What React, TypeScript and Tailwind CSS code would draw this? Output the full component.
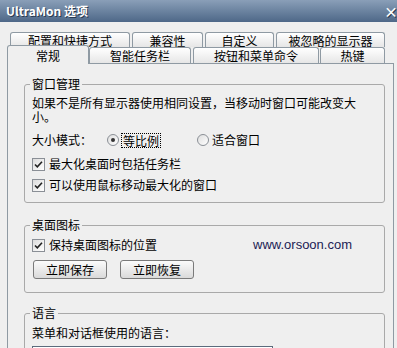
import React from 'react';

const font = { fontFamily: '"Noto Sans CJK SC", "Liberation Sans", sans-serif' };

const Tab: React.FC<{ label: string; w: string; active?: boolean; back?: boolean; className?: string }> = ({ label, w, active, back, className = '' }) => (
  <div
    className={`${w} ${className} flex items-center justify-center border border-[#8f9aa3] rounded-t-[3px] text-[12px] leading-[13px] text-black ${
      active
        ? 'h-[19px] -mb-[1px] border-b-0 bg-[#efefef] relative z-10 items-start pt-[3px]'
        : back
        ? 'h-[15px] border-b-0 bg-linear-to-b from-[#ffffff] to-[#e6e6e6]'
        : 'h-[16px] border-b-0 bg-linear-to-b from-[#ffffff] to-[#e6e6e6]'
    }`}
  >
    {label}
  </div>
);

const CheckBox: React.FC<{ label: string }> = ({ label }) => (
  <div className="flex items-center h-[16px] gap-[4px]">
    <div className="w-[13px] h-[13px] border border-[#8a8f96] bg-linear-to-br from-[#dcdcdc] to-[#ffffff] flex items-center justify-center">
      <svg width="9" height="9" viewBox="0 0 9 9">
        <path d="M1 4.5 L3.3 6.8 L8 1.8" stroke="#222" strokeWidth="1.6" fill="none" />
      </svg>
    </div>
    <span className="text-[12px] leading-[14px]">{label}</span>
  </div>
);

const Radio: React.FC<{ checked?: boolean }> = ({ checked }) => (
  <div className="w-[12px] h-[12px] rounded-full border border-[#8a8f96] bg-linear-to-br from-[#dedede] to-[#ffffff] flex items-center justify-center">
    {checked && <div className="w-[4px] h-[4px] rounded-full bg-[#333]" />}
  </div>
);

const Button: React.FC<{ label: string }> = ({ label }) => (
  <button className="w-[74px] h-[19px] border border-[#7a7a7a] rounded-[3px] bg-linear-to-b from-[#fbfbfb] to-[#dadada] text-[12px] leading-[14px] text-black flex items-center justify-center">
    {label}
  </button>
);

const Group: React.FC<{ title: string; className?: string; children: React.ReactNode }> = ({ title, className = '', children }) => (
  <fieldset className={`ml-[16px] mr-[8px] border border-[#a9a9a9] rounded-[3px] px-[7px] ${className}`}>
    <legend className="-ml-[2px] px-[2px] text-[12px] leading-[16px]">{title}</legend>
    {children}
  </fieldset>
);

export default function App() {
  return (
    <div className="w-[397px] h-[348px] overflow-hidden bg-[#efefef] text-black" style={font}>
      <div className="h-[22px] flex items-center justify-between bg-linear-to-b from-[#8a9fb8] to-[#4e6888] pl-[6px]">
        <span className="text-white font-bold text-[12px] [text-shadow:1px_1px_0_#2a3a50]">UltraMon 选项</span>
        <span className="text-white font-bold text-[14px] -mr-[1px] [text-shadow:1px_1px_0_#2a3a50]">×</span>
      </div>

      <div className="mt-[10px] flex h-[15px] items-start">
        <Tab label="配置和快捷方式" w="w-[120px]" className="ml-[10px]" back />
        <Tab label="兼容性" w="w-[71px]" className="ml-[2px]" back />
        <Tab label="自定义" w="w-[69px]" className="ml-[2px]" back />
        <Tab label="被忽略的显示器" w="w-[109px]" className="ml-[2px]" back />
      </div>
      <div className="flex h-[16px] items-end">
        <Tab label="常规" w="w-[82px]" className="ml-[7px]" active />
        <Tab label="智能任务栏" w="w-[102px]" />
        <Tab label="按钮和菜单命令" w="w-[126px]" className="ml-[2px]" />
        <Tab label="热键" w="w-[65px]" className="ml-[1px]" />
      </div>

      <div className="ml-[7px] w-[387px] h-[300px] border border-[#8f9aa3] pt-[12px]">
        <Group title="窗口管理" className="pb-[9px]">
          <div className="mt-[4px] w-[330px] text-[12px] leading-[14px]">
            如果不是所有显示器使用相同设置，当移动时窗口可能改变大小。
          </div>
          <div className="mt-[8px] flex items-center h-[16px] text-[12px] leading-[14px]">
            <span className="w-[75px]">大小模式：</span>
            <div className="w-[90px] flex items-center gap-[2px]">
              <Radio checked />
              <span className="border border-dotted border-black px-[1px] leading-[13px]">等比例</span>
            </div>
            <div className="flex items-center gap-[3px]">
              <Radio />
              <span>适合窗口</span>
            </div>
          </div>
          <div className="mt-[8px]">
            <CheckBox label="最大化桌面时包括任务栏" />
          </div>
          <div className="mt-[5px]">
            <CheckBox label="可以使用鼠标移动最大化的窗口" />
          </div>
        </Group>

        <Group title="桌面图标" className="mt-[14px] pb-[13px]">
          <div className="mt-[4px] flex items-center">
            <CheckBox label="保持桌面图标的位置" />
            <span
              className="ml-auto mr-[25px] text-[13px] leading-[16px] text-[#1c1c54]"
              style={{ fontFamily: '"Liberation Sans", sans-serif' }}
            >
              www.orsoon.com
            </span>
          </div>
          <div className="mt-[7px] flex gap-[13px] ml-[1px]">
            <Button label="立即保存" />
            <Button label="立即恢复" />
          </div>
        </Group>

        <Group title="语言" className="mt-[12px] pb-[8px]">
          <div className="mt-[5px] text-[12px] leading-[14px]">菜单和对话框使用的语言：</div>
          <div className="mt-[6px] w-[241px] h-[21px] border border-[#5b6b7c] bg-white" />
        </Group>
      </div>
    </div>
  );
}
